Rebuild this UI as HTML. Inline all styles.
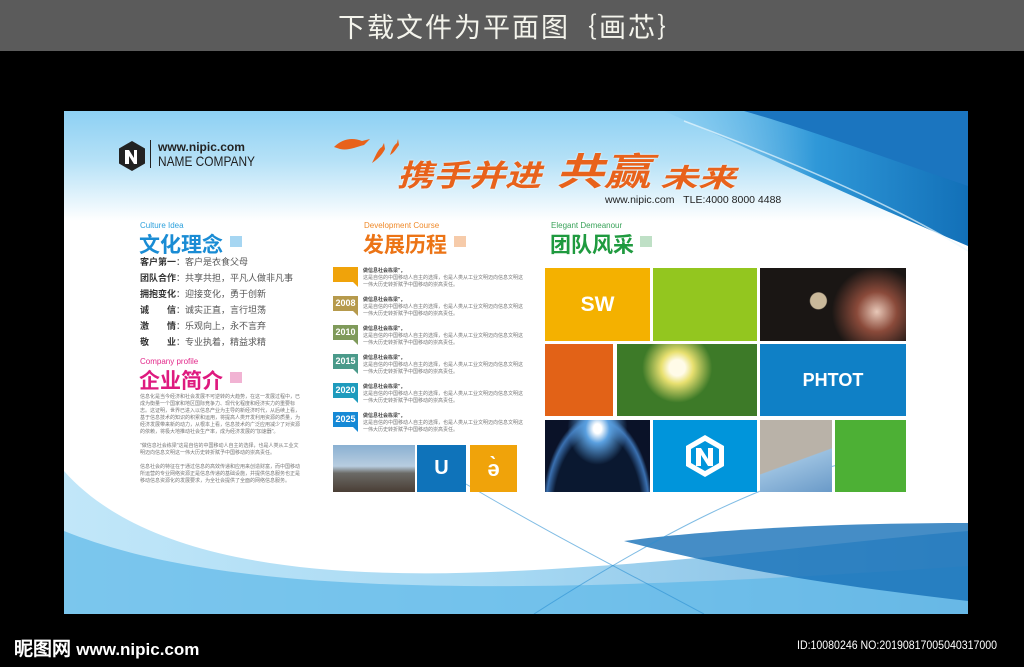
<!DOCTYPE html>
<html><head><meta charset="utf-8"><style>
*{margin:0;padding:0;box-sizing:border-box}
body{width:1024px;height:667px;background:#000;position:relative;overflow:hidden;font-family:"Liberation Sans","Noto Sans CJK SC",sans-serif}
.a{position:absolute}
.top{left:0;top:0;width:1024px;height:51px;background:#5b5b5b;color:#f4f4ec;font-size:27px;text-align:center;line-height:52px;letter-spacing:2px;font-family:"WenQuanYi Zen Hei","Noto Sans CJK SC",sans-serif}
.board{left:64px;top:111px;width:904px;height:503px;background:#fff;overflow:hidden}
.sm{font-size:5px;color:#777;line-height:7px}
.li{font-size:9px;color:#555;height:16px;line-height:16px}
.li b{color:#333}
.tile{position:absolute;color:#fff;font-weight:bold;display:flex;align-items:center;justify-content:center}
.yr{position:absolute;left:0;width:25px;height:15px;color:#fff;font-size:9px;font-weight:bold;text-align:center;line-height:15px}
.yr:after{content:"";position:absolute;right:0;bottom:-5px;border-top:5px solid;border-top-color:inherit;border-left:5px solid transparent}
.ti{position:absolute;left:30px;width:160px}
.ti b{display:block;font-size:5px;color:#444;line-height:8px}
.sl{position:absolute;color:#e8621b;font-weight:bold;font-style:italic;line-height:1;white-space:nowrap;transform-origin:left top;text-shadow:0 0 2px #fff}
</style></head><body>
<div class="a top">下载文件为平面图｛画芯｝</div>
<div class="a board">
<div class="a" style="left:0;top:0;width:904px;height:110px;background:linear-gradient(#8dd0f3 0%,#b5e1f7 45%,#e4f4fc 80%,#fff 100%)"></div>
<svg class="a" style="left:0;top:0" width="904" height="503">
<defs>
<linearGradient id="bg" x1="0" y1="0" x2="1" y2="0"><stop offset="0" stop-color="#8fd3f4"/><stop offset="0.5" stop-color="#5cb8e8"/><stop offset="1" stop-color="#1a7fc6"/></linearGradient>
<linearGradient id="sw" x1="0" y1="0" x2="1" y2="0"><stop offset="0" stop-color="#7fc8ef" stop-opacity="0.3"/><stop offset="0.5" stop-color="#2f98d8"/><stop offset="1" stop-color="#1270b8"/></linearGradient>
</defs>
<path d="M600 0 L904 0 L904 135 C820 100 700 45 600 0Z" fill="url(#sw)"/>
<path d="M680 0 L904 0 L904 75 C830 50 750 20 680 0Z" fill="#1b75bf"/>
<path d="M620 10 C740 55 840 100 904 140" stroke="#e8f6fd" stroke-width="1.5" fill="none" opacity="0.7"/>
<path d="M0 360 C80 450 250 470 450 460 C650 450 780 430 904 420 L904 503 L0 503Z" fill="url(#bg)" opacity="0.55"/>
<path d="M0 420 C150 480 400 490 904 455 L904 503 L0 503Z" fill="#5cb8e8" opacity="0.7"/>
<path d="M560 430 C650 418 780 412 904 412 L904 490 C800 478 680 462 560 430Z" fill="#1670b8" opacity="0.8"/>
<path d="M380 360 C480 420 560 460 640 503" stroke="#2b8fd2" stroke-width="1" fill="none" opacity="0.6"/>
<path d="M470 503 C600 420 700 370 790 350" stroke="#2b8fd2" stroke-width="1" fill="none" opacity="0.6"/>
</svg>
<!-- logo -->
<svg class="a" style="left:53px;top:29px" width="30" height="32" viewBox="0 0 30 32"><polygon points="15,1 28,8.5 28,23.5 15,31 2,23.5 2,8.5" fill="#222"/><path d="M8 24V10h4l5 8V10h3v14h-3l-5-8v8z" fill="#fff"/></svg>
<div class="a" style="left:86px;top:29px;width:1px;height:28px;background:#222"></div>
<div class="a" style="left:94px;top:29px;font-size:12px;font-weight:bold;color:#222">www.nipic.com</div>
<div class="a" style="left:94px;top:42px;font-size:14px;color:#222;transform:scaleX(0.85);transform-origin:left">NAME COMPANY</div>
<!-- birds -->
<svg class="a" style="left:268px;top:22px" width="70" height="36" viewBox="0 0 70 36">
<path d="M2 14 C10 6 20 4 30 8 L38 6 L32 12 C24 14 16 18 8 16Z" fill="#e8621b"/>
<path d="M40 30 C44 22 46 16 50 14 L52 10 L53 16 C50 22 46 26 40 30Z" fill="#e8621b"/>
<path d="M58 22 C60 16 62 12 65 10 L66 6 L67 12 C64 16 62 20 58 22Z" fill="#e8621b"/>
</svg>
<div class="sl" style="left:333px;top:51px;font-size:30px;transform:scaleX(1.2)">携手并进</div>
<div class="sl" style="left:492px;top:43px;font-size:38px;transform:scaleX(1.25)">共赢</div>
<div class="sl" style="left:596px;top:54px;font-size:26px;transform:scaleX(1.45)">未来</div>
<div class="a" style="left:541px;top:83px;font-size:10.5px;color:#222">www.nipic.com&nbsp;&nbsp;&nbsp;TLE:4000 8000 4488</div>
<!-- culture -->
<div class="a" style="left:76px;top:110px;font-size:8px;color:#2da1dc">Culture Idea</div>
<div class="a" style="left:75px;top:118px;font-size:21px;font-weight:bold;color:#1a8cd4">文化理念</div>
<div class="a" style="left:166px;top:125px;width:12px;height:11px;background:#a6d6f2"></div>
<div class="a" style="left:76px;top:143px">
<div class="li"><b>客户第一</b>：客户是衣食父母</div>
<div class="li"><b>团队合作</b>：共享共担，平凡人做非凡事</div>
<div class="li"><b>拥抱变化</b>：迎接变化，勇于创新</div>
<div class="li"><b>诚　　信</b>：诚实正直，言行坦荡</div>
<div class="li"><b>激　　情</b>：乐观向上，永不言弃</div>
<div class="li"><b>敬　　业</b>：专业执着，精益求精</div>
</div>
<div class="a" style="left:76px;top:246px;font-size:8px;color:#e2288a">Company profile</div>
<div class="a" style="left:75px;top:254px;font-size:21px;font-weight:bold;color:#de1a7f">企业简介</div>
<div class="a" style="left:166px;top:261px;width:12px;height:11px;background:#f1b3d3"></div>
<div class="a sm" style="left:76px;top:283px;width:160px">信息化是当今经济和社会发展不可逆转的大趋势，在这一发展过程中，已成为衡量一个国家和地区国际竞争力、现代化程度和经济实力的重要标志。这证明，世界已进入以信息产业为主导的新经济时代，从后续上看，基于信息技术的知识的积累和运用，将提高人类开发利用资源的质量，为经济发展带来新的动力，从根本上看，信息技术的广泛应用减少了对资源的依赖，将极大地推动社会生产率，成为经济发展的"加速器"。<br><br>"做信息社会栋梁"这是自信的中国移动人自主的选择，也是人类从工业文明迈向信息文明这一伟大历史转折赋予中国移动的崇高责任。<br><br>信息社会的特征在于通过信息的高效传递和应用来创造财富，而中国移动所运营的专业网络资源正是信息传递的基础设施，并提供信息服务也正是移动信息资源化的发展要求，为全社会提供了全面的网络信息服务。</div>
<!-- development -->
<div class="a" style="left:300px;top:110px;font-size:8px;color:#ef8a2a">Development Course</div>
<div class="a" style="left:299px;top:118px;font-size:21px;font-weight:bold;color:#ec7416">发展历程</div>
<div class="a" style="left:390px;top:125px;width:12px;height:11px;background:#f6cbaa"></div>
<div class="a" style="left:269px;top:156px;width:200px;height:180px">
<div class="yr" style="top:0;background:#f0a30a;border-color:#f0a30a"></div>
<div class="ti" style="top:0"><b>做信息社会栋梁"，</b><div class="sm">这是自信的中国移动人自主的选择，也是人类从工业文明迈向信息文明这一伟大历史转折赋予中国移动的崇高责任。</div></div>
<div class="yr" style="top:29px;background:#b69a4c;border-color:#b69a4c">2008</div>
<div class="ti" style="top:29px"><b>做信息社会栋梁"，</b><div class="sm">这是自信的中国移动人自主的选择，也是人类从工业文明迈向信息文明这一伟大历史转折赋予中国移动的崇高责任。</div></div>
<div class="yr" style="top:58px;background:#7f9a5a;border-color:#7f9a5a">2010</div>
<div class="ti" style="top:58px"><b>做信息社会栋梁"，</b><div class="sm">这是自信的中国移动人自主的选择，也是人类从工业文明迈向信息文明这一伟大历史转折赋予中国移动的崇高责任。</div></div>
<div class="yr" style="top:87px;background:#4a9a8a;border-color:#4a9a8a">2015</div>
<div class="ti" style="top:87px"><b>做信息社会栋梁"，</b><div class="sm">这是自信的中国移动人自主的选择，也是人类从工业文明迈向信息文明这一伟大历史转折赋予中国移动的崇高责任。</div></div>
<div class="yr" style="top:116px;background:#1e9bbd;border-color:#1e9bbd">2020</div>
<div class="ti" style="top:116px"><b>做信息社会栋梁"，</b><div class="sm">这是自信的中国移动人自主的选择，也是人类从工业文明迈向信息文明这一伟大历史转折赋予中国移动的崇高责任。</div></div>
<div class="yr" style="top:145px;background:#1689d6;border-color:#1689d6">2025</div>
<div class="ti" style="top:145px"><b>做信息社会栋梁"，</b><div class="sm">这是自信的中国移动人自主的选择，也是人类从工业文明迈向信息文明这一伟大历史转折赋予中国移动的崇高责任。</div></div>
</div>
<div class="tile" style="left:269px;top:334px;width:82px;height:47px;background:linear-gradient(#8ab0d2 0%,#b8cde0 45%,#6b6a66 60%,#4a3e35 100%)"></div>
<div class="tile" style="left:353px;top:334px;width:49px;height:47px;background:#0f73ba;font-size:20px">U</div>
<div class="tile" style="left:406px;top:334px;width:47px;height:47px;background:#f0a30a;font-size:22px">ə̀</div>
<!-- team -->
<div class="a" style="left:487px;top:110px;font-size:8px;color:#3aa35a">Elegant Demeanour</div>
<div class="a" style="left:486px;top:118px;font-size:21px;font-weight:bold;color:#1f9a3f">团队风采</div>
<div class="a" style="left:576px;top:125px;width:12px;height:11px;background:#bfe0c6"></div>
<div class="tile" style="left:481px;top:157px;width:105px;height:73px;background:#f4b100;font-size:21px">SW</div>
<div class="tile" style="left:589px;top:157px;width:104px;height:73px;background:#93c61f"></div>
<div class="tile" style="left:696px;top:157px;width:146px;height:73px;background:radial-gradient(circle at 40% 45%,#c9b89a 0 8px,transparent 9px),radial-gradient(circle at 80% 60%,#e8c8b8 0,#8a4a3a 20px,transparent 45px),#1a1614"></div>
<div class="tile" style="left:481px;top:233px;width:68px;height:72px;background:#e26217"></div>
<div class="tile" style="left:553px;top:233px;width:140px;height:72px;background:radial-gradient(circle at 43% 33%,#fffbe8 0 8px,#e8e070 16px,transparent 35px),#3d7a28"></div>
<div class="tile" style="left:696px;top:233px;width:146px;height:72px;background:#0f80c6;font-size:18px">PHTOT</div>
<div class="tile" style="left:481px;top:309px;width:105px;height:72px;background:radial-gradient(ellipse at 50% 12%,#fff 0 4px,#5aa0e0 12px,transparent 30px),radial-gradient(ellipse at 50% 130%,#0a1830 60%,#3a70b0 70%,#0a1228 75%)"></div>
<div class="tile" style="left:589px;top:309px;width:104px;height:72px;background:#0095db">
<svg width="44" height="46" viewBox="0 0 44 46"><polygon points="22,2 41,13 41,33 22,44 3,33 3,13" fill="#fff"/><polygon points="22,8 36,16 36,30 22,38 8,30 8,16" fill="#0095db"/><path d="M13 33V15h5l7 11V15h5v18h-5l-7-11v11z" fill="#fff"/></svg></div>
<div class="tile" style="left:696px;top:309px;width:72px;height:72px;background:linear-gradient(160deg,#b9b2a8 0 55%,#9ac0e0 56%,#6a9ac8 100%)"></div>
<div class="tile" style="left:771px;top:309px;width:71px;height:72px;background:#4db035"></div>
</div>
<div class="a" style="left:14px;top:634px;color:#fff;font-size:19px;font-weight:bold;font-family:'WenQuanYi Zen Hei',sans-serif">昵图网 <span style="font-family:'Liberation Sans';font-size:17px">www.nipic.com</span></div>
<div class="a" style="left:797px;top:640px;color:#fff;font-size:11.5px;transform:scaleX(0.92);transform-origin:left">ID:10080246 NO:20190817005040317000</div>
</body></html>
